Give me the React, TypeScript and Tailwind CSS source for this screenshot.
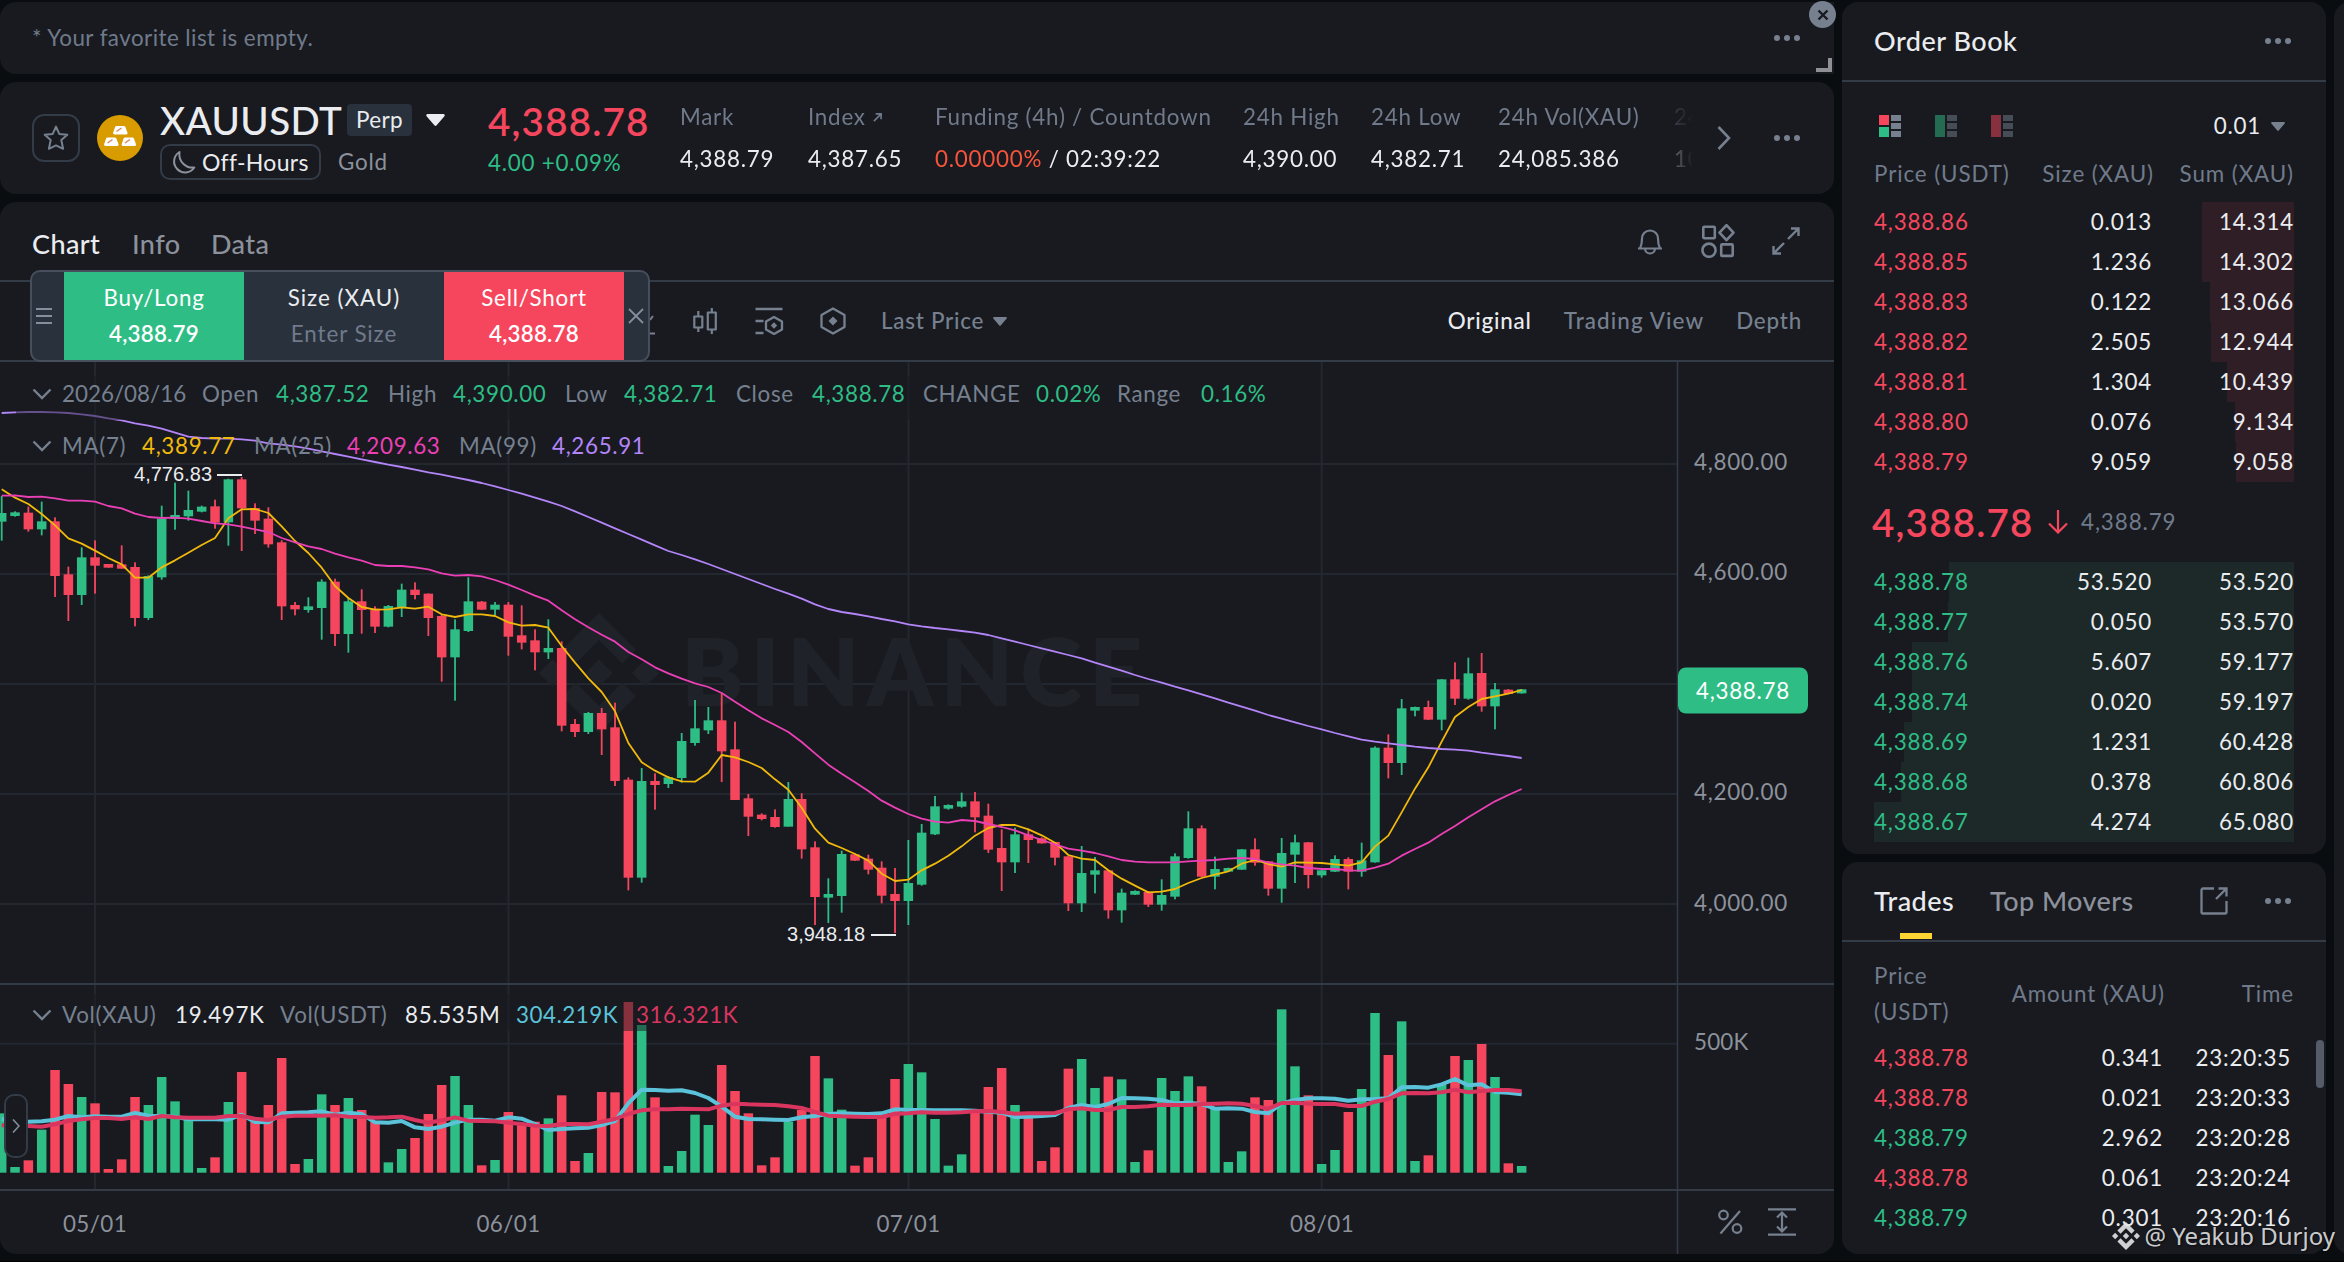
import type { ReactNode } from "react"

type Candle = [high: number, top: number, bottom: number, low: number, side: "G" | "R"]

const UP = "#2ebd85"
const DOWN = "#f6465d"

// Candles are stored in three blocks, in thirds of a pixel below each block's base line.
const blocks: { base: number; rows: Candle[] }[] = [
  {
    base: 350,
    rows: [
      [438, 489, 515, 572, "G"], [484, 487, 498, 500, "G"], [470, 488, 538, 545, "R"], [455, 514, 538, 556, "G"],
      [502, 514, 678, 741, "R"], [650, 673, 735, 813, "R"], [592, 622, 735, 765, "G"], [571, 622, 647, 731, "R"],
      [642, 642, 653, 653, "R"], [586, 643, 656, 656, "R"], [637, 651, 804, 829, "R"], [676, 678, 804, 810, "G"],
      [467, 506, 682, 689, "G"], [398, 495, 507, 539, "G"], [422, 480, 499, 512, "G"], [467, 470, 485, 487, "G"],
      [449, 469, 518, 536, "R"], [386, 388, 517, 587, "G"], [381, 388, 475, 603, "R"], [460, 474, 512, 552, "R"],
      [472, 506, 583, 593, "R"], [571, 577, 769, 810, "R"], [756, 765, 778, 796, "R"], [742, 769, 780, 788, "G"],
      [688, 695, 774, 869, "G"], [686, 695, 852, 888, "R"], [744, 754, 852, 908, "G"], [718, 754, 780, 851, "R"],
      [769, 776, 830, 849, "R"], [765, 768, 830, 832, "G"], [701, 719, 772, 801, "G"], [697, 719, 735, 748, "R"],
      [730, 731, 804, 858, "R"], [795, 798, 922, 995, "R"], [808, 838, 922, 1052, "G"], [682, 754, 843, 846, "G"],
      [753, 755, 779, 780, "R"], [756, 764, 779, 797, "G"], [756, 764, 860, 917, "R"], [766, 856, 878, 898, "R"],
      [838, 871, 907, 961, "R"], [808, 894, 907, 927, "G"],
    ],
  },
  {
    base: 550,
    rows: [
      [274, 294, 527, 544, "R"], [507, 522, 546, 561, "R"], [486, 489, 546, 552, "G"], [474, 489, 538, 615, "R"],
      [458, 532, 693, 708, "R"], [682, 689, 983, 1021, "R"], [654, 693, 983, 998, "G"], [670, 693, 705, 779, "R"],
      [678, 682, 702, 714, "G"], [549, 573, 684, 698, "G"], [450, 535, 579, 587, "G"], [471, 511, 541, 552, "G"],
      [430, 511, 604, 696, "R"], [515, 598, 750, 750, "R"], [732, 745, 800, 858, "R"], [790, 794, 807, 811, "R"],
      [778, 801, 831, 833, "R"], [696, 747, 830, 830, "G"], [730, 747, 898, 926, "R"], [874, 892, 1041, 1125, "R"],
      [985, 1032, 1043, 1119, "G"], [902, 912, 1038, 1088, "G"], [910, 913, 932, 933, "R"], [914, 926, 959, 973, "R"],
      [934, 953, 1037, 1060, "R"], [954, 1032, 1053, 1149, "R"], [870, 999, 1053, 1125, "G"], [822, 848, 1004, 1007, "G"],
      [738, 769, 853, 855, "G"], [763, 765, 776, 779, "G"], [728, 754, 770, 773, "G"], [726, 754, 802, 847, "R"],
      [761, 797, 899, 909, "R"], [838, 894, 937, 1023, "R"], [833, 853, 937, 969, "G"], [836, 853, 870, 939, "R"],
      [862, 865, 880, 881, "R"],
    ],
  },
  {
    base: 600,
    rows: [
      [726, 726, 773, 796, "R"], [767, 769, 910, 933, "R"], [738, 819, 910, 936, "G"], [771, 811, 824, 880, "G"],
      [810, 811, 931, 956, "R"], [866, 878, 931, 968, "G"], [871, 873, 884, 885, "G"], [873, 876, 914, 921, "R"],
      [838, 885, 914, 932, "G"], [760, 769, 890, 898, "G"], [634, 685, 774, 776, "G"], [676, 685, 830, 831, "R"],
      [770, 807, 830, 868, "G"], [803, 804, 815, 816, "G"], [747, 748, 809, 810, "G"], [715, 748, 788, 797, "R"],
      [783, 784, 866, 887, "R"], [714, 759, 866, 908, "G"], [704, 727, 764, 849, "G"], [726, 727, 825, 865, "R"],
      [806, 811, 826, 833, "G"], [766, 777, 815, 816, "G"], [772, 777, 815, 868, "R"], [728, 781, 815, 830, "G"],
      [439, 443, 787, 788, "G"], [403, 443, 489, 535, "R"], [297, 325, 489, 525, "G"], [320, 321, 332, 349, "G"],
      [302, 321, 359, 360, "R"], [237, 238, 359, 391, "G"], [187, 238, 296, 315, "R"], [173, 220, 296, 299, "G"],
      [159, 219, 319, 335, "R"], [249, 268, 319, 388, "G"], [267, 269, 282, 282, "R"], [267, 268, 280, 281, "G"],
    ],
  },
]

const candles = blocks.flatMap(({ base, rows }) =>
  rows.map(([high, top, bottom, low, side]) => ({
    high: base + high / 3,
    top: base + top / 3,
    bottom: base + bottom / 3,
    low: base + low / 3,
    color: side === "G" ? UP : DOWN,
  })),
)

const dayX = (i: number) => 1.7 + i * 13.333

// Each line is a list of [first day, base, values], same units as the candles.
type Segment = [start: number, base: number, values: number[]]

const ma7: Segment[] = [
  [0, 350, [418, 443, 462, 492, 526, 565, 581, 602, 624, 643, 683, 683, 652, 631, 608, 585, 564, 505, 478, 477, 489, 529, 573, 609, 653, 708, 744, 771, 779, 778, 772, 776, 770, 793, 801, 793, 793, 798, 817, 827, 825, 833]],
  [42, 550, [288, 338, 385, 426, 484, 579, 637, 662, 682, 694, 695, 668, 615, 622, 636, 654, 688, 719, 773, 836, 878, 894, 912, 932, 971, 993, 989, 961, 941, 917, 889, 857, 834, 825, 825, 838, 856]],
  [79, 600, [728, 765, 776, 780, 811, 836, 857, 877, 875, 867, 849, 834, 824, 814, 791, 780, 792, 800, 787, 788, 789, 793, 797, 787, 740, 707, 637, 566, 502, 425, 351, 321, 297, 289, 281, 270]],
]
const ma25: Segment[] = [
  [0, 350, [437, 436, 441, 440, 445, 452, 452, 455, 468, 475, 491, 501, 504, 503, 506, 513, 520, 523, 530, 538, 546, 564, 577, 589, 597, 611, 622, 632, 645, 648, 648, 652, 658, 670, 677, 675, 679, 690, 704, 720, 737, 752]],
  [42, 550, [181, 208, 232, 254, 275, 306, 328, 352, 370, 386, 400, 411, 429, 455, 481, 505, 525, 546, 576, 610, 644, 671, 697, 723, 752, 773, 792, 806, 815, 818, 810, 813, 822, 831, 841, 856, 870]],
  [79, 600, [733, 746, 752, 759, 769, 780, 785, 787, 787, 787, 784, 782, 780, 776, 774, 777, 788, 793, 797, 804, 807, 807, 811, 812, 803, 791, 767, 747, 728, 702, 678, 652, 628, 604, 585, 567]],
]
const ma99: Segment[] = [
  [0, 350, [189, 187, 186, 186, 187, 189, 193, 198, 205, 211, 220, 227, 236, 248, 260, 264, 266, 266, 268, 272, 280, 284, 289, 296, 304, 312, 320, 328, 336, 344, 351, 359, 367, 374, 382, 390, 399, 409, 420, 431, 443, 455]],
  [42, 550, [-132, -116, -99, -82, -65, -48, -31, -14, 3, 15, 28, 42, 57, 72, 87, 102, 117, 131, 146, 163, 177, 186, 192, 199, 207, 214, 223, 229, 234, 238, 243, 248, 255, 265, 275, 285, 295]],
  [79, 600, [155, 165, 175, 188, 200, 212, 225, 237, 248, 260, 271, 283, 295, 308, 320, 332, 345, 356, 367, 378, 388, 399, 409, 419, 425, 430, 435, 440, 444, 447, 449, 452, 458, 463, 468, 474]],
]

const volumeTops = [
  430, 591, 571, 479, 300, 342, 381, 400, 597, 568, 381, 405, 321, 394, 445, 594, 562, 396, 306, 455, 405, 264, 582,
  567, 373, 405, 384, 420, 455, 577, 537, 504, 432, 345, 318, 405, 586, 570, 426, 462, 455, 445, 376, 573, 549, 366,
  367, 96, 165, 382, 588, 543, 434, 465, 285, 363, 430, 586, 562, 455, 420, 258, 325, 419, 587, 562, 440, 327, 282,
  307, 447, 587, 553, 428, 351, 294, 405, 440, 573, 532, 296, 267, 354, 320, 328, 576, 541, 324, 363, 319, 349, 415,
  576, 544, 382, 390, 118, 289, 376, 582, 540, 426, 357, 129, 255, 154, 573, 556, 345, 258, 270, 222, 321, 580, 588,
]
const volFast: Segment[] = [
  [0, 970, [447, 455, 455, 454, 449, 438, 442, 439, 440, 440, 429, 437, 438, 440, 448, 448, 448, 449, 434, 456, 457, 430, 428, 427, 424, 434, 428, 432, 457, 458, 453, 472, 477, 470, 458, 449, 449, 452, 442, 446, 462, 480, 477, 475, 473, 465, 453, 400, 359, 360, 362, 361, 369, 384, 410, 440, 447, 448, 449, 450, 442, 438, 432, 430, 431, 432, 430, 418, 420, 420, 421, 421, 421, 422, 425, 428, 441, 440, 438, 435, 414, 405, 411, 402, 384, 385, 386, 390, 400, 398, 402, 416, 415, 416, 426, 430, 400, 390, 385, 385, 386, 392, 388, 387, 385, 352, 351, 353, 343, 327, 346, 343, 366, 368, 373]],
]
const volSlow: Segment[] = [
  [0, 970, [466, 467, 468, 470, 463, 453, 448, 444, 444, 447, 442, 447, 438, 442, 443, 443, 443, 438, 438, 446, 450, 440, 437, 437, 437, 436, 440, 441, 443, 442, 440, 450, 458, 451, 442, 452, 453, 454, 458, 462, 467, 468, 462, 462, 463, 455, 447, 432, 421, 418, 418, 416, 417, 418, 407, 401, 403, 404, 405, 409, 414, 426, 437, 439, 440, 441, 441, 432, 430, 427, 428, 428, 427, 424, 423, 426, 431, 430, 430, 429, 418, 415, 420, 420, 411, 411, 409, 404, 405, 405, 402, 401, 400, 401, 408, 416, 399, 398, 401, 402, 402, 408, 408, 395, 387, 370, 369, 370, 367, 359, 367, 363, 360, 360, 364]],
]

const toPoints = (line: Segment[]) =>
  line.flatMap(([start, base, values]) => values.map((v, i) => `${dayX(start + i)},${base + v / 3}`)).join(" ")

const asks = [
  ["4,388.86", "0.013", "14.314", 92],
  ["4,388.85", "1.236", "14.302", 92],
  ["4,388.83", "0.122", "13.066", 84],
  ["4,388.82", "2.505", "12.944", 83],
  ["4,388.81", "1.304", "10.439", 67],
  ["4,388.80", "0.076", "9.134", 59],
  ["4,388.79", "9.059", "9.058", 58],
] as const

const bids = [
  ["4,388.78", "53.520", "53.520", 345],
  ["4,388.77", "0.050", "53.570", 346],
  ["4,388.76", "5.607", "59.177", 382],
  ["4,388.74", "0.020", "59.197", 382],
  ["4,388.69", "1.231", "60.428", 390],
  ["4,388.68", "0.378", "60.806", 393],
  ["4,388.67", "4.274", "65.080", 420],
] as const

const trades = [
  ["4,388.78", "0.341", "23:20:35", "sell"],
  ["4,388.78", "0.021", "23:20:33", "sell"],
  ["4,388.79", "2.962", "23:20:28", "buy"],
  ["4,388.78", "0.061", "23:20:24", "sell"],
  ["4,388.79", "0.301", "23:20:16", "buy"],
]

function Dots({ className = "" }: { className?: string }) {
  return (
    <div className={`flex gap-1 ${className}`}>
      <span className="size-1.5 rounded-full bg-[#76808f]" />
      <span className="size-1.5 rounded-full bg-[#76808f]" />
      <span className="size-1.5 rounded-full bg-[#76808f]" />
    </div>
  )
}

function Caret({ className = "" }: { className?: string }) {
  return (
    <svg viewBox="0 0 14 9" className={className} fill="currentColor">
      <path d="M1 0h12a1 1 0 0 1 .7 1.6L7.7 8.6a1 1 0 0 1-1.4 0L.3 1.6A1 1 0 0 1 1 0z" />
    </svg>
  )
}

function BinanceMark({ className = "" }: { className?: string }) {
  return (
    <svg viewBox="0 0 126.6 126.6" className={className} fill="currentColor">
      <path d="M38.7 53.2 63.3 28.6 87.9 53.2 102.2 38.9 63.3 0 24.4 38.9z" />
      <path d="M0 63.3 14.3 49 28.6 63.3 14.3 77.6z" />
      <path d="M38.7 73.4 63.3 98 87.9 73.4 102.2 87.7 63.3 126.6 24.4 87.7z" />
      <path d="M98 63.3 112.3 49 126.6 63.3 112.3 77.6z" />
      <path d="M77.8 63.3 63.3 48.8 48.8 63.3 63.3 77.8z" />
    </svg>
  )
}

function Favorites() {
  return (
    <div className="relative flex h-[72px] items-center justify-between rounded-l-2xl bg-[#181a20] pl-8 pr-[34px]">
      <p className="text-[#707a8a] tracking-[0.45px]">* Your favorite list is empty.</p>
      <Dots />
      <div className="absolute -top-px right-[-2px] flex size-[27px] items-center justify-center rounded-full bg-[#76808f]">
        <svg viewBox="0 0 12 12" className="size-3" stroke="#181a20" strokeWidth="2.4">
          <path d="M1.5 1.5l9 9M10.5 1.5l-9 9" />
        </svg>
      </div>
      <div className="absolute bottom-0.5 right-0.5 h-3.5 w-4 border-b-4 border-r-4 border-[#8f9093]" />
    </div>
  )
}

function Stat({ label, className, children }: { label: ReactNode; className: string; children: ReactNode }) {
  return (
    <div className={`flex shrink-0 flex-col justify-between whitespace-nowrap ${className}`}>
      <div className="flex h-7 items-center leading-7 text-[#707a8a]">{label}</div>
      <div className="h-7 leading-7 text-[#eaecef]">{children}</div>
    </div>
  )
}

function GoldIcon() {
  const bar = "M3.5 0h7.5a1.6 1.6 0 0 1 1.4 1l2 5.4a1.5 1.5 0 0 1-1.4 2H1.5a1.4 1.4 0 0 1-1.3-2L2.1 1A1.6 1.6 0 0 1 3.5 0z"
  return (
    <svg viewBox="0 0 46 46" className="ml-[17px] size-[46px] shrink-0">
      <circle cx="23" cy="23" r="23" fill="#d89b00" />
      <g fill="#fff">
        <path d={bar} transform="translate(16 11)" />
        <path d={bar} transform="translate(7 22.5)" />
        <path d={bar} transform="translate(24.5 22.5)" />
      </g>
      <g stroke="#d98a5b" strokeWidth="1.5">
        <path d="M19.5 16.5l5-3.5M10.5 28l5-3.5M28 28l5-3.5" />
      </g>
    </svg>
  )
}

function Ticker() {
  return (
    <div className="mt-2 flex h-28 items-center rounded-2xl bg-[#181a20] pl-8 pr-[34px]">
      <div className="flex size-12 shrink-0 items-center justify-center rounded-xl border-2 border-[#333b47]">
        <svg viewBox="0 0 26 26" className="size-[26px]" fill="none" stroke="#76808f" strokeWidth="2" strokeLinejoin="round">
          <path d="M13 1.6l3.3 7.3 8 .8-6 5.3 1.8 8.8L13 20.4l-7.1 3.4L7.7 15l-6-5.3 8-.8z" />
        </svg>
      </div>
      <GoldIcon />
      <div className="ml-[17px] mt-2 w-[327px] shrink-0">
        <div className="flex h-8 items-center">
          <span className="w-[187px] text-[38.5px] font-medium leading-8 tracking-[0.4px] text-[#eaecef]">XAUUSDT</span>
          <span className="flex h-8 w-[65px] items-center justify-center rounded bg-[#29313d] text-[22.5px] tracking-[0.4px] text-[#eaecef]">
            Perp
          </span>
          <Caret className="ml-3.5 h-3 w-[19px] text-[#eaecef]" />
        </div>
        <div className="mt-2 flex h-9 items-center">
          <div className="flex h-9 w-[161px] items-center rounded-[10px] border-2 border-[#333b47] pl-2.5">
            <svg viewBox="0 0 24 24" className="size-6" fill="none" stroke="#8c919b" strokeWidth="2" strokeLinejoin="round">
              <path d="M7.5 2A11 11 0 1 0 22.300 17.500C14 18.500 6 11.500 7.500 2z" />
            </svg>
            <span className="ml-1.5 text-[23px] tracking-[0.3px] text-[#eaecef]">Off-Hours</span>
          </div>
          <span className="ml-[17px] text-[#8c919b]">Gold</span>
        </div>
      </div>
      <div className="mt-[3px] w-[193px] shrink-0 pl-px">
        <div className="text-[38.5px] font-semibold leading-9 tracking-[1.2px] text-[#f6465d]">4,388.78</div>
        <div className="mt-2.5 h-7 leading-7 text-[#2ebd85]">4.00 +0.09%</div>
      </div>
      <div className="flex h-[70px] w-[1015px] shrink-0 overflow-hidden [mask-image:linear-gradient(to_right,#000_960px,transparent_1013px)]">
        <Stat label="Mark" className="w-32">4,388.79</Stat>
        <Stat
          label={
            <>
              Index
              <svg viewBox="0 0 10 10" className="ml-[7px] size-[9px]" fill="none" stroke="#707a8a" strokeWidth="1.8">
                <path d="M1 9l7.500-7.500M3 1h6v6" />
              </svg>
            </>
          }
          className="w-[127px]"
        >
          4,387.65
        </Stat>
        <Stat label="Funding (4h) / Countdown" className="w-[308px]">
          <span className="text-[#f6543b]">0.00000%</span> / 02:39:22
        </Stat>
        <Stat label="24h High" className="w-32">4,390.00</Stat>
        <Stat label="24h Low" className="w-[127px]">4,382.71</Stat>
        <Stat label="24h Vol(XAU)" className="w-44">24,085.386</Stat>
        <Stat label="24h Vol(USDT)" className="w-40">105.72M</Stat>
      </div>
      <svg viewBox="0 0 14 24" className="ml-[22px] h-6 w-3.5" fill="none" stroke="#76808f" strokeWidth="2.600">
        <path d="M1.500 1l10.500 11-10.500 11" />
      </svg>
      <Dots className="ml-auto" />
    </div>
  )
}

function ChartHeader() {
  return (
    <div className="flex h-20 items-center border-b-2 border-[#333b47] pl-8 pr-[34px] text-[27px] font-medium tracking-[0.4px]">
      <div className="flex gap-8 pt-1.5 text-[#8c919b]">
        <span className="w-[68px] text-[#eaecef]">Chart</span>
        <span className="w-[47px]">Info</span>
        <span>Data</span>
      </div>
      <div className="ml-auto flex items-center text-[#76808f]">
        <svg viewBox="0 0 28 30" className="h-[30px] w-7" fill="none" stroke="currentColor" strokeWidth="2.200">
          <path d="M2 22.500h24M4 22.500c1.500-3 2-6 2-10a8 8 0 0 1 16 0c0 4 .5 7 2 10M9 22.500a5 5 0 0 0 10 0" />
        </svg>
        <svg viewBox="0 0 34 34" className="ml-[37px] size-[34px]" fill="none" stroke="currentColor" strokeWidth="2.600" strokeLinejoin="round">
          <rect x="2.300" y="2.800" width="11.500" height="11.500" rx="1" />
          <path d="M25.500 1.200l7 7.500-7 7.500-7-7.500z" />
          <circle cx="8" cy="26.200" r="6.600" />
          <rect x="20.200" y="20.400" width="11.500" height="11.500" rx="1" />
        </svg>
        <svg viewBox="0 0 28 28" className="ml-[37px] size-7" fill="none" stroke="currentColor" strokeWidth="2.400">
          <path d="M19 1.500h7.500V9M26 2L16 12M9 26.500H1.500V19M2 26l10-10" />
        </svg>
      </div>
    </div>
  )
}

function Toolbar() {
  return (
    <div className="flex h-20 items-center border-b-2 border-[#333b47] pl-[650px] pr-8 text-[#76808f]">
      <svg viewBox="0 0 6 28" className="h-7 w-1.5" fill="none" stroke="currentColor" strokeWidth="2">
        <path d="M0 13l3-4M0 26.500h5" />
      </svg>
      <svg viewBox="0 0 26 28" className="ml-9 h-7 w-[26px]" fill="none" stroke="currentColor" strokeWidth="2.200" strokeLinejoin="round">
        <rect x="2.300" y="9.500" width="8" height="11" />
        <rect x="15.800" y="5.500" width="8" height="17" />
        <path d="M6.300 4v5.500M6.300 20.500V25M19.800 1v4.500M19.800 22.500V27" />
      </svg>
      <svg viewBox="0 0 30 28" className="ml-9 h-7 w-[30px]" fill="none" stroke="currentColor" strokeWidth="2.300" strokeLinejoin="round">
        <path d="M1.500 2h27M1.500 14h8M1.500 26h8" />
        <path d="M20 10l8 4.500v8L20 27l-8-4.500v-8z" />
        <path d="M20 15.300l3.200 3.200-3.200 3.200-3.200-3.200z" fill="currentColor" stroke="none" />
      </svg>
      <svg viewBox="0 0 26 28" className="ml-9 h-7 w-[26px]" fill="none" stroke="currentColor" strokeWidth="2.300" strokeLinejoin="round">
        <path d="M13 1.500L24.500 8v12L13 26.500 1.500 20V8z" />
        <path d="M13 9.500l4.500 4.500-4.500 4.500L8.500 14z" fill="currentColor" stroke="none" />
      </svg>
      <span className="ml-[35px] w-[112px] whitespace-nowrap font-medium">Last Price</span>
      <Caret className="h-[9px] w-3.5" />
      <div className="ml-auto flex gap-8 font-medium tracking-[0.8px]">
        <span className="text-[#eaecef]">Original</span>
        <span className="tracking-[1.1px]">Trading View</span>
        <span>Depth</span>
      </div>
    </div>
  )
}

function QuickOrder() {
  return (
    <div className="absolute left-[30px] top-[68px] flex h-[92px] w-[620px] overflow-hidden rounded-[10px] border-2 border-[#474f5c] bg-[#29313d] text-center">
      <div className="flex w-8 flex-col items-start justify-center gap-[5px] pl-1">
        <span className="h-0.5 w-4 bg-[#848e9c]" />
        <span className="h-0.5 w-4 bg-[#848e9c]" />
        <span className="h-0.5 w-4 bg-[#848e9c]" />
      </div>
      <div className="flex w-[180px] flex-col justify-center gap-2 bg-[#2ebd85] leading-7 text-white">
        <span>Buy/Long</span>
        <span className="font-semibold tracking-[0.2px]">4,388.79</span>
      </div>
      <div className="flex w-[200px] flex-col justify-center gap-2 leading-7">
        <span className="text-[#eaecef] tracking-[1px]">Size (XAU)</span>
        <span className="text-[#707a8a] tracking-[0.9px]">Enter Size</span>
      </div>
      <div className="flex w-[180px] flex-col justify-center gap-2 bg-[#f6465d] leading-7 text-white">
        <span>Sell/Short</span>
        <span className="font-semibold tracking-[0.2px]">4,388.78</span>
      </div>
      <div className="flex flex-1 items-center justify-center">
        <svg viewBox="0 0 16 16" className="size-4" stroke="#848e9c" strokeWidth="1.800">
          <path d="M1 1l14 14M15 1L1 15" />
        </svg>
      </div>
    </div>
  )
}

function Chevron() {
  return (
    <svg viewBox="0 0 20 12" className="mr-2.5 h-3 w-5" fill="none" stroke="#76808f" strokeWidth="2.400">
      <path d="M1.500 1.500l8.500 8.500 8.500-8.500" />
    </svg>
  )
}

const ohlc = [
  ["2026/08/16", "w-[140px] tracking-normal"],
  ["Open", "w-[74px]"],
  ["4,387.52", "w-[112px] text-[#2ebd85]"],
  ["High", "w-[65px]"],
  ["4,390.00", "w-[112px] text-[#2ebd85]"],
  ["Low", "w-[59px]"],
  ["4,382.71", "w-[112px] text-[#2ebd85]"],
  ["Close", "w-[76px]"],
  ["4,388.78", "w-[111px] text-[#2ebd85]"],
  ["CHANGE", "w-[113px]"],
  ["0.02%", "w-[81px] text-[#2ebd85]"],
  ["Range", "w-[84px]"],
  ["0.16%", "w-[70px] text-[#2ebd85]"],
]

const averages = [
  ["MA(7)", "w-[80px]"],
  ["4,389.77", "w-28 text-[#f0b90b]"],
  ["MA(25)", "w-[93px]"],
  ["4,209.63", "w-28 text-[#eb40b5]"],
  ["MA(99)", "w-[93px]"],
  ["4,265.91", "w-24 text-[#b385f8]"],
]

const volumes = [
  ["Vol(XAU)", "w-[113px]"],
  ["19.497K", "w-[105px] text-[#eaecef]"],
  ["Vol(USDT)", "w-[125px]"],
  ["85.535M", "w-[111px] text-[#eaecef]"],
  ["304.219K", "w-[120px] text-[#5bc3d9] tracking-[0.5px]"],
  ["316.321K", "w-[104px] text-[#d9355f] tracking-[0.5px]"],
]

function Legend({ items, className }: { items: string[][]; className: string }) {
  return (
    <div className={`absolute left-8 flex items-center whitespace-nowrap text-[#76808f] tracking-[0.65px] ${className}`}>
      <Chevron />
      {items.map(([text, style]) => (
        <span key={text} className={style}>
          {text}
        </span>
      ))}
    </div>
  )
}

function PriceChart() {
  return (
    <svg viewBox="0 362 1834 892" className="block h-[892px] w-[1834px]" fontSize="22.4" letterSpacing="0.7">
      <g stroke="#23272f" strokeWidth="2">
        {[464, 574, 684, 794, 904, 1043.7].map((y) => (
          <path key={y} d={`M0 ${y}H1677`} />
        ))}
        {[95, 508.5, 908.5, 1321.7].map((x) => (
          <path key={x} d={`M${x} 362V1190`} />
        ))}
      </g>

      <g fill="#1f2228">
        <svg x="539" y="613" width="120" height="120" viewBox="0 0 126.6 126.6">
          <path d="M38.7 53.2 63.3 28.6 87.9 53.2 102.2 38.9 63.3 0 24.4 38.9z" />
          <path d="M0 63.3 14.3 49 28.6 63.3 14.3 77.6z" />
          <path d="M38.7 73.4 63.3 98 87.9 73.4 102.2 87.7 63.3 126.6 24.4 87.7z" />
          <path d="M98 63.3 112.3 49 126.6 63.3 112.3 77.6z" />
          <path d="M77.8 63.3 63.3 48.8 48.8 63.3 63.3 77.8z" />
        </svg>
        <text x="681" y="706" fontSize="93" fontWeight="800" textLength="462">
          BINANCE
        </text>
      </g>

      {volumeTops.map((top, i) => (
        <rect key={i} x={dayX(i) - 4.75} y={970 + top / 3} width="9.5" height={202.7 - top / 3} fill={candles[i].color} />
      ))}
      <g fill="none" strokeWidth="4" strokeLinejoin="round">
        <polyline points={toPoints(volFast)} stroke="#5bc3d9" />
        <polyline points={toPoints(volSlow)} stroke="#d9355f" />
      </g>

      {candles.map((c, i) => (
        <g key={i} fill={c.color}>
          <rect x={dayX(i) - 0.9} y={c.high} width="1.8" height={c.low - c.high} />
          <rect x={dayX(i) - 4.75} y={c.top} width="9.5" height={c.bottom - c.top} />
        </g>
      ))}
      <g fill="none" strokeWidth="1.8" strokeLinejoin="round">
        <polyline points={toPoints(ma7)} stroke="#f0b90b" />
        <polyline points={toPoints(ma25)} stroke="#eb40b5" />
        <polyline points={toPoints(ma99)} stroke="#b385f8" />
      </g>
      {/* legend backdrops dim what runs behind them */}
      <rect x="16" y="376" width="1262" height="44" fill="#181a20" fillOpacity="0.5" />
      <rect x="16" y="994" width="728" height="37" fill="#181a20" fillOpacity="0.5" />

      <g fill="#eaecef" fontSize="20" letterSpacing="0" className="font-['Liberation_Sans',Arial,sans-serif]">
        <text x="134" y="481" textLength="78">4,776.83</text>
        <text x="787" y="941" textLength="78">3,948.18</text>
        <rect x="217" y="474" width="25" height="2" />
        <rect x="871" y="934" width="25" height="2" />
      </g>

      <g stroke="#333b47" strokeWidth="2">
        <path d="M0 984H1834M0 1190H1834" />
        <path d="M1677.5 362V1254" strokeWidth="1.5" />
      </g>

      <g fill="#8c919b">
        <text x="1694" y="470">4,800.00</text>
        <text x="1694" y="580">4,600.00</text>
        <text x="1694" y="800">4,200.00</text>
        <text x="1694" y="911">4,000.00</text>
        <text x="1694" y="1050" letterSpacing="0.2">500K</text>
        <g textAnchor="middle" letterSpacing="0.4">
          <text x="95" y="1232">05/01</text>
          <text x="508.5" y="1232">06/01</text>
          <text x="908.5" y="1232">07/01</text>
          <text x="1322" y="1232">08/01</text>
        </g>
      </g>
      <rect x="1678" y="667.5" width="130" height="46" rx="8" fill="#2ebd85" />
      <text x="1696" y="699" fill="#fff">4,388.78</text>

      <g fill="none" stroke="#76808f" strokeWidth="2.2">
        <circle cx="1723.500" cy="1215" r="4.300" />
        <circle cx="1737" cy="1228.500" r="4.300" />
        <path d="M1740 1211l-19.500 22.500M1768 1209.300h28M1768 1234.700h28M1782 1213v18M1777 1217.500l5-5 5 5M1777 1226.500l5 5 5-5" />
      </g>
    </svg>
  )
}

function ChartPanel() {
  return (
    <div className="relative mt-2 h-[1052px] overflow-hidden rounded-2xl bg-[#181a20]">
      <ChartHeader />
      <Toolbar />
      <PriceChart />
      <Legend items={ohlc} className="top-[177px]" />
      <Legend items={averages} className="top-[229px]" />
      <Legend items={volumes} className="top-[798px]" />
      <QuickOrder />
      <div className="absolute left-1 top-[892px] flex h-16 w-6 items-center justify-center rounded-[10px] border-2 border-[#333b47] bg-[#181a20]">
        <svg viewBox="0 0 8 14" className="h-3.5 w-2" fill="none" stroke="#848e9c" strokeWidth="1.600">
          <path d="M1 .5l6 6.500-6 6.500" />
        </svg>
      </div>
    </div>
  )
}

function BookIcon({ bars, muted }: { bars: string[]; muted?: boolean }) {
  return (
    <div className={`flex size-[22px] gap-0.5 ${muted ? "opacity-50" : ""}`}>
      <div className="flex w-2.5 flex-col gap-0.5">
        {bars.map((bar) => (
          <span key={bar} className={`flex-1 ${bar}`} />
        ))}
      </div>
      <div className="flex w-2.5 flex-col justify-between">
        <span className="h-1.5 bg-[#76808f]" />
        <span className="h-1.5 bg-[#76808f]" />
        <span className="h-1.5 bg-[#76808f]" />
      </div>
    </div>
  )
}

function BookRow({ row, side }: { row: readonly [string, string, string, number]; side: "ask" | "bid" }) {
  const [price, size, sum, depth] = row
  const ask = side === "ask"
  return (
    <div className="relative flex h-10 items-center tracking-[0.8px]">
      <div className={`absolute inset-y-0 right-0 ${ask ? "bg-[#2f1e25]" : "bg-[#1d2829]"}`} style={{ width: depth }} />
      <span className={`relative w-[138px] ${ask ? "text-[#f6465d]" : "text-[#2ebd85]"}`}>{price}</span>
      <span className="relative w-[140px] text-right text-[#eaecef]">{size}</span>
      <span className="relative flex-1 text-right text-[#eaecef]">{sum}</span>
    </div>
  )
}

function OrderBook() {
  return (
    <div className="h-[852px] rounded-2xl bg-[#181a20]">
      <div className="flex h-20 items-center justify-between border-b-2 border-[#333b47] pl-8 pr-[35px]">
        <h2 className="text-[27px] font-medium tracking-[0.5px] text-[#eaecef]">Order Book</h2>
        <Dots />
      </div>
      <div className="px-8">
        <div className="flex items-center gap-[34px] pl-[5px] pt-[29px]">
          <BookIcon bars={["bg-[#f6465d]", "bg-[#2ebd85]"]} />
          <BookIcon bars={["bg-[#2ebd85]"]} muted />
          <BookIcon bars={["bg-[#f6465d]"]} muted />
          <span className="ml-auto -mr-6 text-[#eaecef]">0.01</span>
          <Caret className="mr-[9px] h-[9px] w-3.5 text-[#76808f]" />
        </div>
        <div className="mt-[18px] flex items-center whitespace-nowrap tracking-[0.9px] text-[#707a8a]">
          <span className="w-[138px]">Price (USDT)</span>
          <span className="w-[142px] text-right">Size (XAU)</span>
          <span className="flex-1 text-right">Sum (XAU)</span>
        </div>
      </div>
      <div className="mt-[13px] px-8">
        {asks.map((row) => (
          <BookRow key={row[0]} row={row} side="ask" />
        ))}
        <div className="flex h-20 items-center">
          <span className="-ml-0.5 w-[176px] text-[38.5px] font-semibold tracking-[1.2px] text-[#f6465d]">4,388.78</span>
          <svg viewBox="0 0 20 24" className="h-6 w-5" fill="none" stroke="#f6465d" strokeWidth="2.200">
            <path d="M10 0v22M1 13.500l9 9 9-9" />
          </svg>
          <span className="ml-[13px] tracking-[0.9px] text-[#707a8a]">4,388.79</span>
        </div>
        {bids.map((row) => (
          <BookRow key={row[0]} row={row} side="bid" />
        ))}
      </div>
    </div>
  )
}

function Trades() {
  return (
    <div className="relative mt-2 h-[392px] rounded-2xl bg-[#181a20]">
      <div className="flex h-20 items-center border-b-2 border-[#333b47] pl-8 pr-[35px] text-[27px] font-medium tracking-[0.45px]">
        <div className="relative flex h-full w-[84px] items-center text-[#eaecef]">
          Trades
          <span className="absolute bottom-px left-[26px] h-1.5 w-8 bg-[#fcd535]" />
        </div>
        <span className="ml-8 text-[#8c919b]">Top Movers</span>
        <svg viewBox="0 0 30 30" className="ml-auto size-[30px]" fill="none" stroke="#76808f" strokeWidth="2.300">
          <path d="M15 2.500H4a1.500 1.500 0 0 0-1.500 1.500v22A1.500 1.500 0 0 0 4 27.500h22a1.500 1.500 0 0 0 1.500-1.500V15M19.500 2.500h8v8M27.500 2.500L17 13" />
        </svg>
        <Dots className="ml-9" />
      </div>
      <div className="flex h-24 items-center pl-8 pr-8 pt-2 leading-9 tracking-[0.9px] text-[#707a8a]">
        <span className="w-[100px]">Price (USDT)</span>
        <span className="w-[191px] text-right">Amount (XAU)</span>
        <span className="flex-1 text-right">Time</span>
      </div>
      <div className="pl-8 pr-[35px]">
        {trades.map(([price, amount, time, side]) => (
          <div key={time} className="flex h-10 items-center tracking-[0.8px] text-[#eaecef]">
            <span className={`w-[138px] ${side === "sell" ? "text-[#f6465d]" : "text-[#2ebd85]"}`}>{price}</span>
            <span className="w-[151px] text-right">{amount}</span>
            <span className="flex-1 text-right">{time}</span>
          </div>
        ))}
      </div>
      <div className="absolute right-0.5 top-[178px] h-12 w-2 rounded-full bg-[#555b68]" />
    </div>
  )
}

export default function App() {
  return (
    <div className="relative flex h-[1262px] w-[2344px] gap-2 overflow-hidden border-b border-black bg-[#0a0d10] pt-0.5 font-['Lato','Liberation_Sans',sans-serif] text-[22.4px] leading-[30px] tracking-[0.75px]">
      <div className="w-[1834px] shrink-0">
        <Favorites />
        <Ticker />
        <ChartPanel />
      </div>
      <div className="w-[484px] shrink-0">
        <OrderBook />
        <Trades />
      </div>
      <div className="h-[1252px] w-20 shrink-0 rounded-2xl bg-[#181a20]" />
      <div className="absolute bottom-[9px] right-[9px] flex items-center gap-1 whitespace-nowrap font-['Noto_Sans',sans-serif] text-[24px] leading-8 tracking-normal text-[#e3e4e6]/90 [text-shadow:1px_1px_2px_rgba(0,0,0,0.6)]">
        <BinanceMark className="size-7" />
        @ Yeakub Durjoy
      </div>
    </div>
  )
}
